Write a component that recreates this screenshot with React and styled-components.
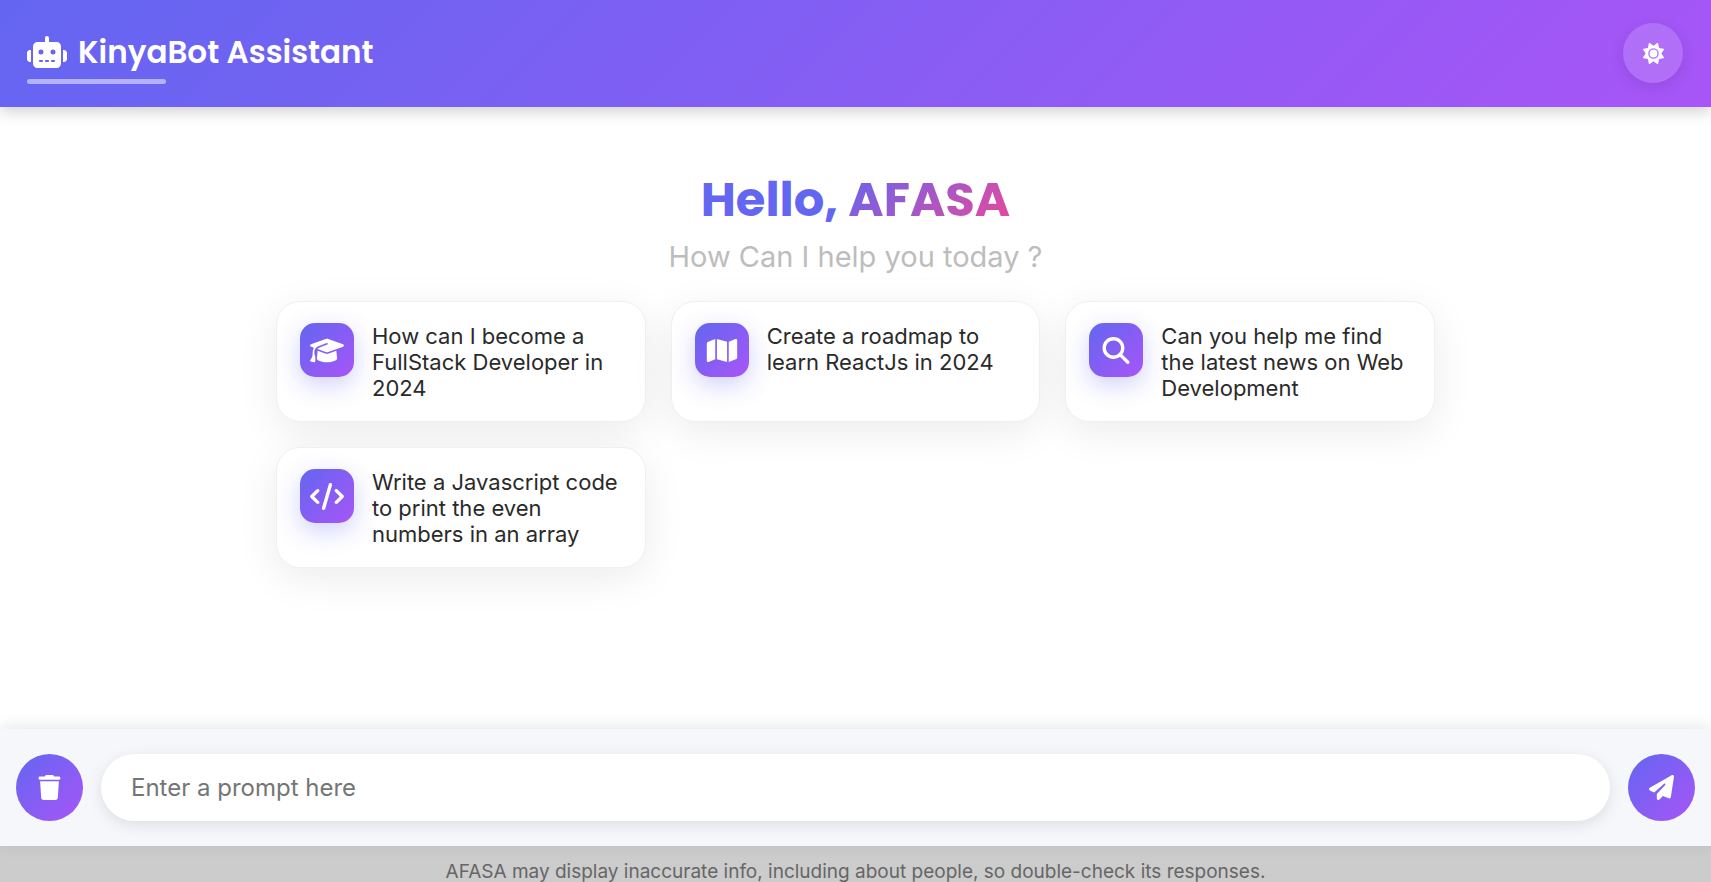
import React, { useState } from "react";
import styled, { createGlobalStyle } from "styled-components";
import {
  FaRobot,
  FaSun,
  FaGraduationCap,
  FaMap,
  FaMagnifyingGlass,
  FaCode,
  FaTrash,
  FaPaperPlane,
} from "react-icons/fa6";

const accent = "linear-gradient(135deg, #6366f1, #a855f7)";

const GlobalStyle = createGlobalStyle`
  * {
    box-sizing: border-box;
  }

  body {
    margin: 0;
    background: #fff;
    color: #222;
    font-family: Inter, "Liberation Sans", sans-serif;
  }

  button,
  input {
    font: inherit;
  }
`;

const Page = styled.div`
  display: flex;
  flex-direction: column;
  height: 100vh;
  overflow: hidden;
`;

const Header = styled.header`
  display: flex;
  align-items: flex-start;
  justify-content: space-between;
  padding: 23px 28px 23px 27px;
  background: ${accent};
  color: #fff;
  box-shadow: 0 4px 15px rgba(0, 0, 0, 0.2);
`;

const Brand = styled.div`
  display: flex;
  flex-direction: column;
  gap: 5px;
  padding-top: 7px;
`;

const BrandName = styled.h1`
  display: flex;
  align-items: center;
  gap: 11px;
  margin: 0;
  font-family: Poppins, Inter, sans-serif;
  font-size: 31px;
  font-weight: 600;
  line-height: 44px;
  white-space: nowrap;

  svg {
    width: 40px;
    height: 32px;
  }
`;

const BrandLine = styled.span`
  width: 139px;
  height: 5px;
  border-radius: 3px;
  background: rgba(255, 255, 255, 0.5);
`;

const RoundButton = styled.button`
  display: flex;
  flex: none;
  align-items: center;
  justify-content: center;
  width: ${(p) => p.$size}px;
  height: ${(p) => p.$size}px;
  padding: 0;
  border: 0;
  border-radius: 50%;
  background: ${(p) => (p.$translucent ? "rgba(255, 255, 255, 0.15)" : accent)};
  box-shadow: ${(p) => (p.$translucent ? "0 4px 15px rgba(0, 0, 0, 0.1)" : "none")};
  color: #fff;
  cursor: pointer;
`;

const Main = styled.main`
  flex: 1;
  width: 100%;
  max-width: 1159px;
  margin: 0 auto;
  padding-top: 59px;
`;

const Greeting = styled.h2`
  margin: 0;
  color: #6366f1;
  font-family: Poppins, Inter, sans-serif;
  font-size: 48px;
  font-weight: 700;
  line-height: 68px;
  text-align: center;
`;

const UserName = styled.span`
  background: linear-gradient(135deg, #6366f1, #ec4899);
  background-clip: text;
  color: transparent;
`;

const Question = styled.p`
  margin: 3px 0 24px;
  color: #bdbdbd;
  font-size: 29px;
  line-height: 40px;
  text-align: center;
`;

const Suggestions = styled.div`
  display: grid;
  grid-template-columns: repeat(auto-fill, minmax(340px, 1fr));
  gap: 25px;
`;

const Card = styled.button`
  display: flex;
  align-items: flex-start;
  gap: 18px;
  padding: 21px 23px 20px;
  border: 1px solid #f0f0f0;
  border-radius: 24px;
  background: #fff;
  box-shadow: 0 10px 40px rgba(0, 0, 0, 0.08);
  color: #2a2a2a;
  font-size: 22px;
  line-height: 26px;
  text-align: left;
  cursor: pointer;
`;

const CardIcon = styled.span`
  display: flex;
  flex: none;
  align-items: center;
  justify-content: center;
  width: 54px;
  height: 54px;
  border-radius: 15px;
  background: ${accent};
  box-shadow: 0 8px 25px rgba(99, 102, 241, 0.3);
  color: #fff;

  svg {
    width: 34px;
    height: 27px;
  }
`;

const Composer = styled.form`
  position: relative;
  display: flex;
  align-items: center;
  gap: 18px;
  padding: 25px 16px;
  background: #f5f7fb;
  box-shadow: 0 -2px 15px rgba(0, 0, 0, 0.1);
`;

const Prompt = styled.input`
  flex: 1;
  min-width: 0;
  height: 67px;
  padding: 0 30px;
  border: 0;
  border-radius: 34px;
  outline: 0;
  background: #fff;
  box-shadow: 0 4px 15px rgba(0, 0, 0, 0.1);
  color: #222;
  font-size: 24px;

  &::placeholder {
    color: #757575;
    opacity: 1;
  }
`;

const Notice = styled.footer`
  flex: none;
  height: 36px;
  padding-top: 12px;
  background: #ccc;
  color: #666;
  font-size: 19px;
  line-height: 28px;
  text-align: center;
  white-space: nowrap;
`;

const suggestions = [
  { text: "How can I become a FullStack Developer in 2024", Icon: FaGraduationCap },
  { text: "Create a roadmap to learn ReactJs in 2024", Icon: FaMap },
  { text: "Can you help me find the latest news on Web Development", Icon: FaMagnifyingGlass },
  { text: "Write a Javascript code to print the even numbers in an array", Icon: FaCode },
];

export default function App() {
  const [prompt, setPrompt] = useState("");

  return (
    <Page>
      <GlobalStyle />
      <Header>
        <Brand>
          <BrandName>
            <FaRobot />
            KinyaBot Assistant
          </BrandName>
          <BrandLine />
        </Brand>
        <RoundButton type="button" aria-label="Toggle theme" $size={60} $translucent>
          <FaSun size={21} />
        </RoundButton>
      </Header>
      <Main>
        <Greeting>
          Hello, <UserName>AFASA</UserName>
        </Greeting>
        <Question>How Can I help you today ?</Question>
        <Suggestions>
          {suggestions.map(({ text, Icon }) => (
            <Card key={text} type="button" onClick={() => setPrompt(text)}>
              <CardIcon>
                <Icon />
              </CardIcon>
              <span>{text}</span>
            </Card>
          ))}
        </Suggestions>
      </Main>
      <Composer onSubmit={(e) => e.preventDefault()}>
        <RoundButton type="button" aria-label="Clear conversation" $size={67} onClick={() => setPrompt("")}>
          <FaTrash size={25} />
        </RoundButton>
        <Prompt
          aria-label="Prompt"
          placeholder="Enter a prompt here"
          value={prompt}
          onChange={(e) => setPrompt(e.target.value)}
        />
        <RoundButton type="submit" aria-label="Send" $size={67}>
          <FaPaperPlane size={25} />
        </RoundButton>
      </Composer>
      <Notice>AFASA may display inaccurate info, including about people, so double-check its responses.</Notice>
    </Page>
  );
}
